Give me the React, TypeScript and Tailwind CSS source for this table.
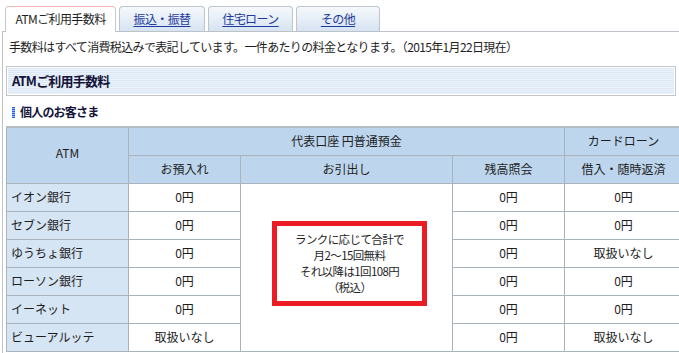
import React from 'react'

const rows = [
  { name: 'イオン銀行', deposit: '0円', balance: '0円', loan: '0円' },
  { name: 'セブン銀行', deposit: '0円', balance: '0円', loan: '0円' },
  { name: 'ゆうちょ銀行', deposit: '0円', balance: '0円', loan: '取扱いなし' },
  { name: 'ローソン銀行', deposit: '0円', balance: '0円', loan: '0円' },
  { name: 'イーネット', deposit: '0円', balance: '0円', loan: '0円' },
  { name: 'ビューアルッテ', deposit: '取扱いなし', balance: '0円', loan: '取扱いなし' },
]

const tabs = [
  { label: '振込・振替', w: 'w-[86px]' },
  { label: '住宅ローン', w: 'w-[85px]' },
  { label: 'その他', w: 'w-[84px]' },
]

const cell = 'border border-[#aab3bb] h-[28px] p-0 text-center align-middle font-normal'

export default function App() {
  return (
    <div className="h-[353px] w-[679px] overflow-hidden bg-white font-['Noto_Sans_CJK_JP','Liberation_Sans',sans-serif] text-[12px] leading-[14px] text-[#1e1e1e]">
      {/* tabs */}
      <div className="flex h-[31px] items-end gap-[3px] pl-[5px]">
        <div className="relative z-10 -mb-px flex h-[26px] w-[111px] items-center justify-center rounded-t-[4px] border border-b-0 border-[#c3c8cd] border-t-[#f3b4b4] bg-white pb-[2px] tracking-[-0.6px]">
          ATMご利用手数料
        </div>
        {tabs.map((t) => (
          <div
            key={t.label}
            className={`${t.w} flex h-[25px] items-center justify-center rounded-t-[4px] border border-b-0 border-[#bcc4cc] bg-gradient-to-b from-[#f6f9fc] to-[#d6e3f1] pb-[1px] tracking-[-0.6px] text-[#1d3a9e] underline underline-offset-2`}
          >
            {t.label}
          </div>
        ))}
      </div>

      {/* content */}
      <div className="ml-[2px] h-[330px] border-l border-t border-[#bcc2c8] pl-[3px]">
        <p className="pl-[3px] pt-[8px] tracking-[-0.65px]">
          手数料はすべて消費税込みで表記しています。一件あたりの料金となります。（2015年1月22日現在）
        </p>

        <div className="mt-[12px] flex h-[30px] w-[670px] items-center border border-[#c4c7ca] bg-[repeating-linear-gradient(to_bottom,#edf3fa_0px,#edf3fa_1px,#dbe7f4_1px,#dbe7f4_2px)] pl-[5px] text-[13px] font-bold tracking-[-0.8px] text-[#14143a] shadow-[inset_0_0_0_1px_#ffffff]">
          ATMご利用手数料
        </div>

        <div className="mt-[9px] flex h-[14px] items-center gap-[5px] pl-[6px]">
          <span className="h-[11px] w-[3px] bg-[repeating-linear-gradient(to_bottom,#1f5ff0_0px,#1f5ff0_1px,#9fbcf6_1px,#9fbcf6_2px)]" />
          <span className="font-bold tracking-[-0.8px] text-[#14143a]">個人のお客さま</span>
        </div>

        <table className="mt-[7px] w-[676px] table-fixed border-collapse border-t-2 border-[#b4bbc2]">
          <colgroup>
            <col className="w-[122px]" />
            <col className="w-[112px]" />
            <col className="w-[212px]" />
            <col className="w-[112px]" />
            <col className="w-[118px]" />
          </colgroup>
          <thead className="bg-[#bdd6ed]">
            <tr>
              <th rowSpan={2} className={`${cell} pb-[4px]`}>ATM</th>
              <th colSpan={3} className={cell}>代表口座 円普通預金</th>
              <th className={cell}>カードローン</th>
            </tr>
            <tr>
              <th className={cell}>お預入れ</th>
              <th className={cell}>お引出し</th>
              <th className={cell}>残高照会</th>
              <th className={cell}>借入・随時返済</th>
            </tr>
          </thead>
          <tbody>
            {rows.map((r, i) => (
              <tr key={r.name}>
                <td className={`${cell} bg-[#d6e5f3] pl-[4px] text-left`}>{r.name}</td>
                <td className={cell}>{r.deposit}</td>
                {i === 0 && (
                  <td rowSpan={6} className={`${cell} pb-[8px]`}>
                    <div className="ml-[31px] flex h-[85px] w-[155px] flex-col items-center justify-center border-[5px] border-[#ec1c24] text-[11.5px] leading-[16px] tracking-[-0.6px]">
                      <span>ランクに応じて合計で</span>
                      <span>月2～15回無料</span>
                      <span>それ以降は1回108円</span>
                      <span>（税込）</span>
                    </div>
                  </td>
                )}
                <td className={cell}>{r.balance}</td>
                <td className={cell}>{r.loan}</td>
              </tr>
            ))}
          </tbody>
        </table>
      </div>
    </div>
  )
}
